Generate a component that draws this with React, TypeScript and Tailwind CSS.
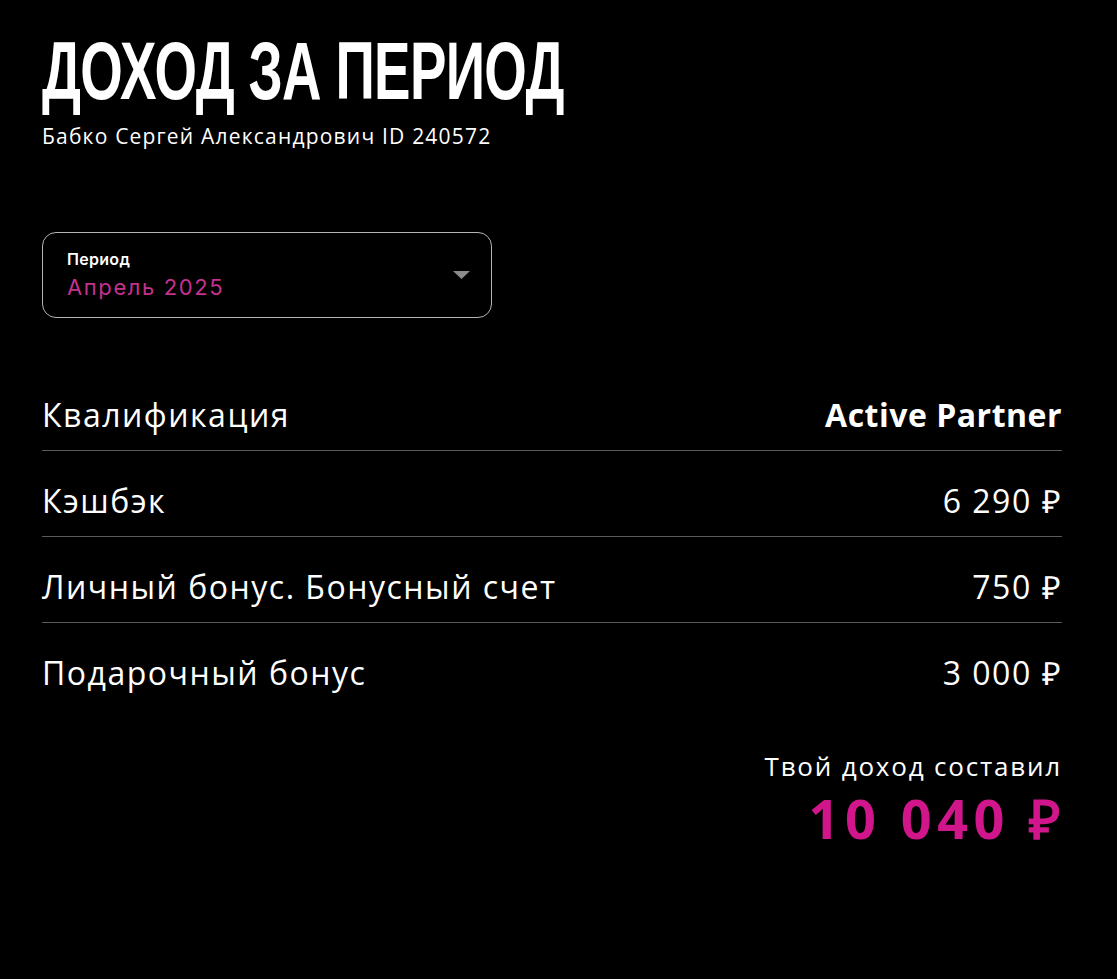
export default function App() {
  const rows = [
    { label: "Квалификация", value: "Active Partner", bold: true },
    { label: "Кэшбэк", value: "6 290 ₽" },
    { label: "Личный бонус. Бонусный счет", value: "750 ₽" },
    { label: "Подарочный бонус", value: "3 000 ₽" },
  ];

  return (
    <div className="min-h-[979px] bg-black text-white font-['Open_Sans','Lato',sans-serif]">
      <div className="w-[1020px] ml-[42px] pt-[27px]">
        <h1 className="origin-left scale-x-[0.667] whitespace-nowrap font-['Liberation_Sans',sans-serif] font-bold text-[82px] leading-[88px] tracking-[-1px]">
          ДОХОД ЗА ПЕРИОД
        </h1>
        <p className="text-[21px] leading-[28px] mt-[7px] tracking-[1.2px]">
          Бабко Сергей Александрович ID 240572
        </p>

        <div className="mt-[82px] w-[450px] h-[86px] rounded-[14px] border border-[#b5b5b5] flex items-center justify-between pl-[24px] pr-[21px]">
          <div className="font-['Inter',sans-serif]">
            <div className="text-[16px] font-semibold leading-[20px] tracking-[0.3px]">Период</div>
            <div className="text-[22px] leading-[30px] text-[#c4318f] mt-[3px] tracking-[1.6px]">Апрель 2025</div>
          </div>
          <svg width="17" height="8" viewBox="0 0 17 8">
            <path d="M0 0h17L8.5 8z" fill="#8a8a8a" />
          </svg>
        </div>

        <div className="mt-[47px]">
          {rows.map((r, i) => (
            <div
              key={r.label}
              className={`flex items-center justify-between h-[86px] pt-[14px] text-[32px] tracking-[1.5px] ${
                i < rows.length - 1 ? "border-b border-[#5a5a5a]" : ""
              }`}
            >
              <span>{r.label}</span>
              <span className={r.bold ? "font-bold tracking-[0.5px]" : ""}>{r.value}</span>
            </div>
          ))}
        </div>

        <div className="mt-[42px] flex flex-col items-end">
          <div className="text-[26px] leading-[30px] tracking-[1.8px]">Твой доход составил</div>
          <div className="mt-[9px] text-[54px] leading-[56px] font-bold text-[#d1168c] tracking-[5.5px] mr-[-4px]">10 040 ₽</div>
        </div>
      </div>
    </div>
  );
}
